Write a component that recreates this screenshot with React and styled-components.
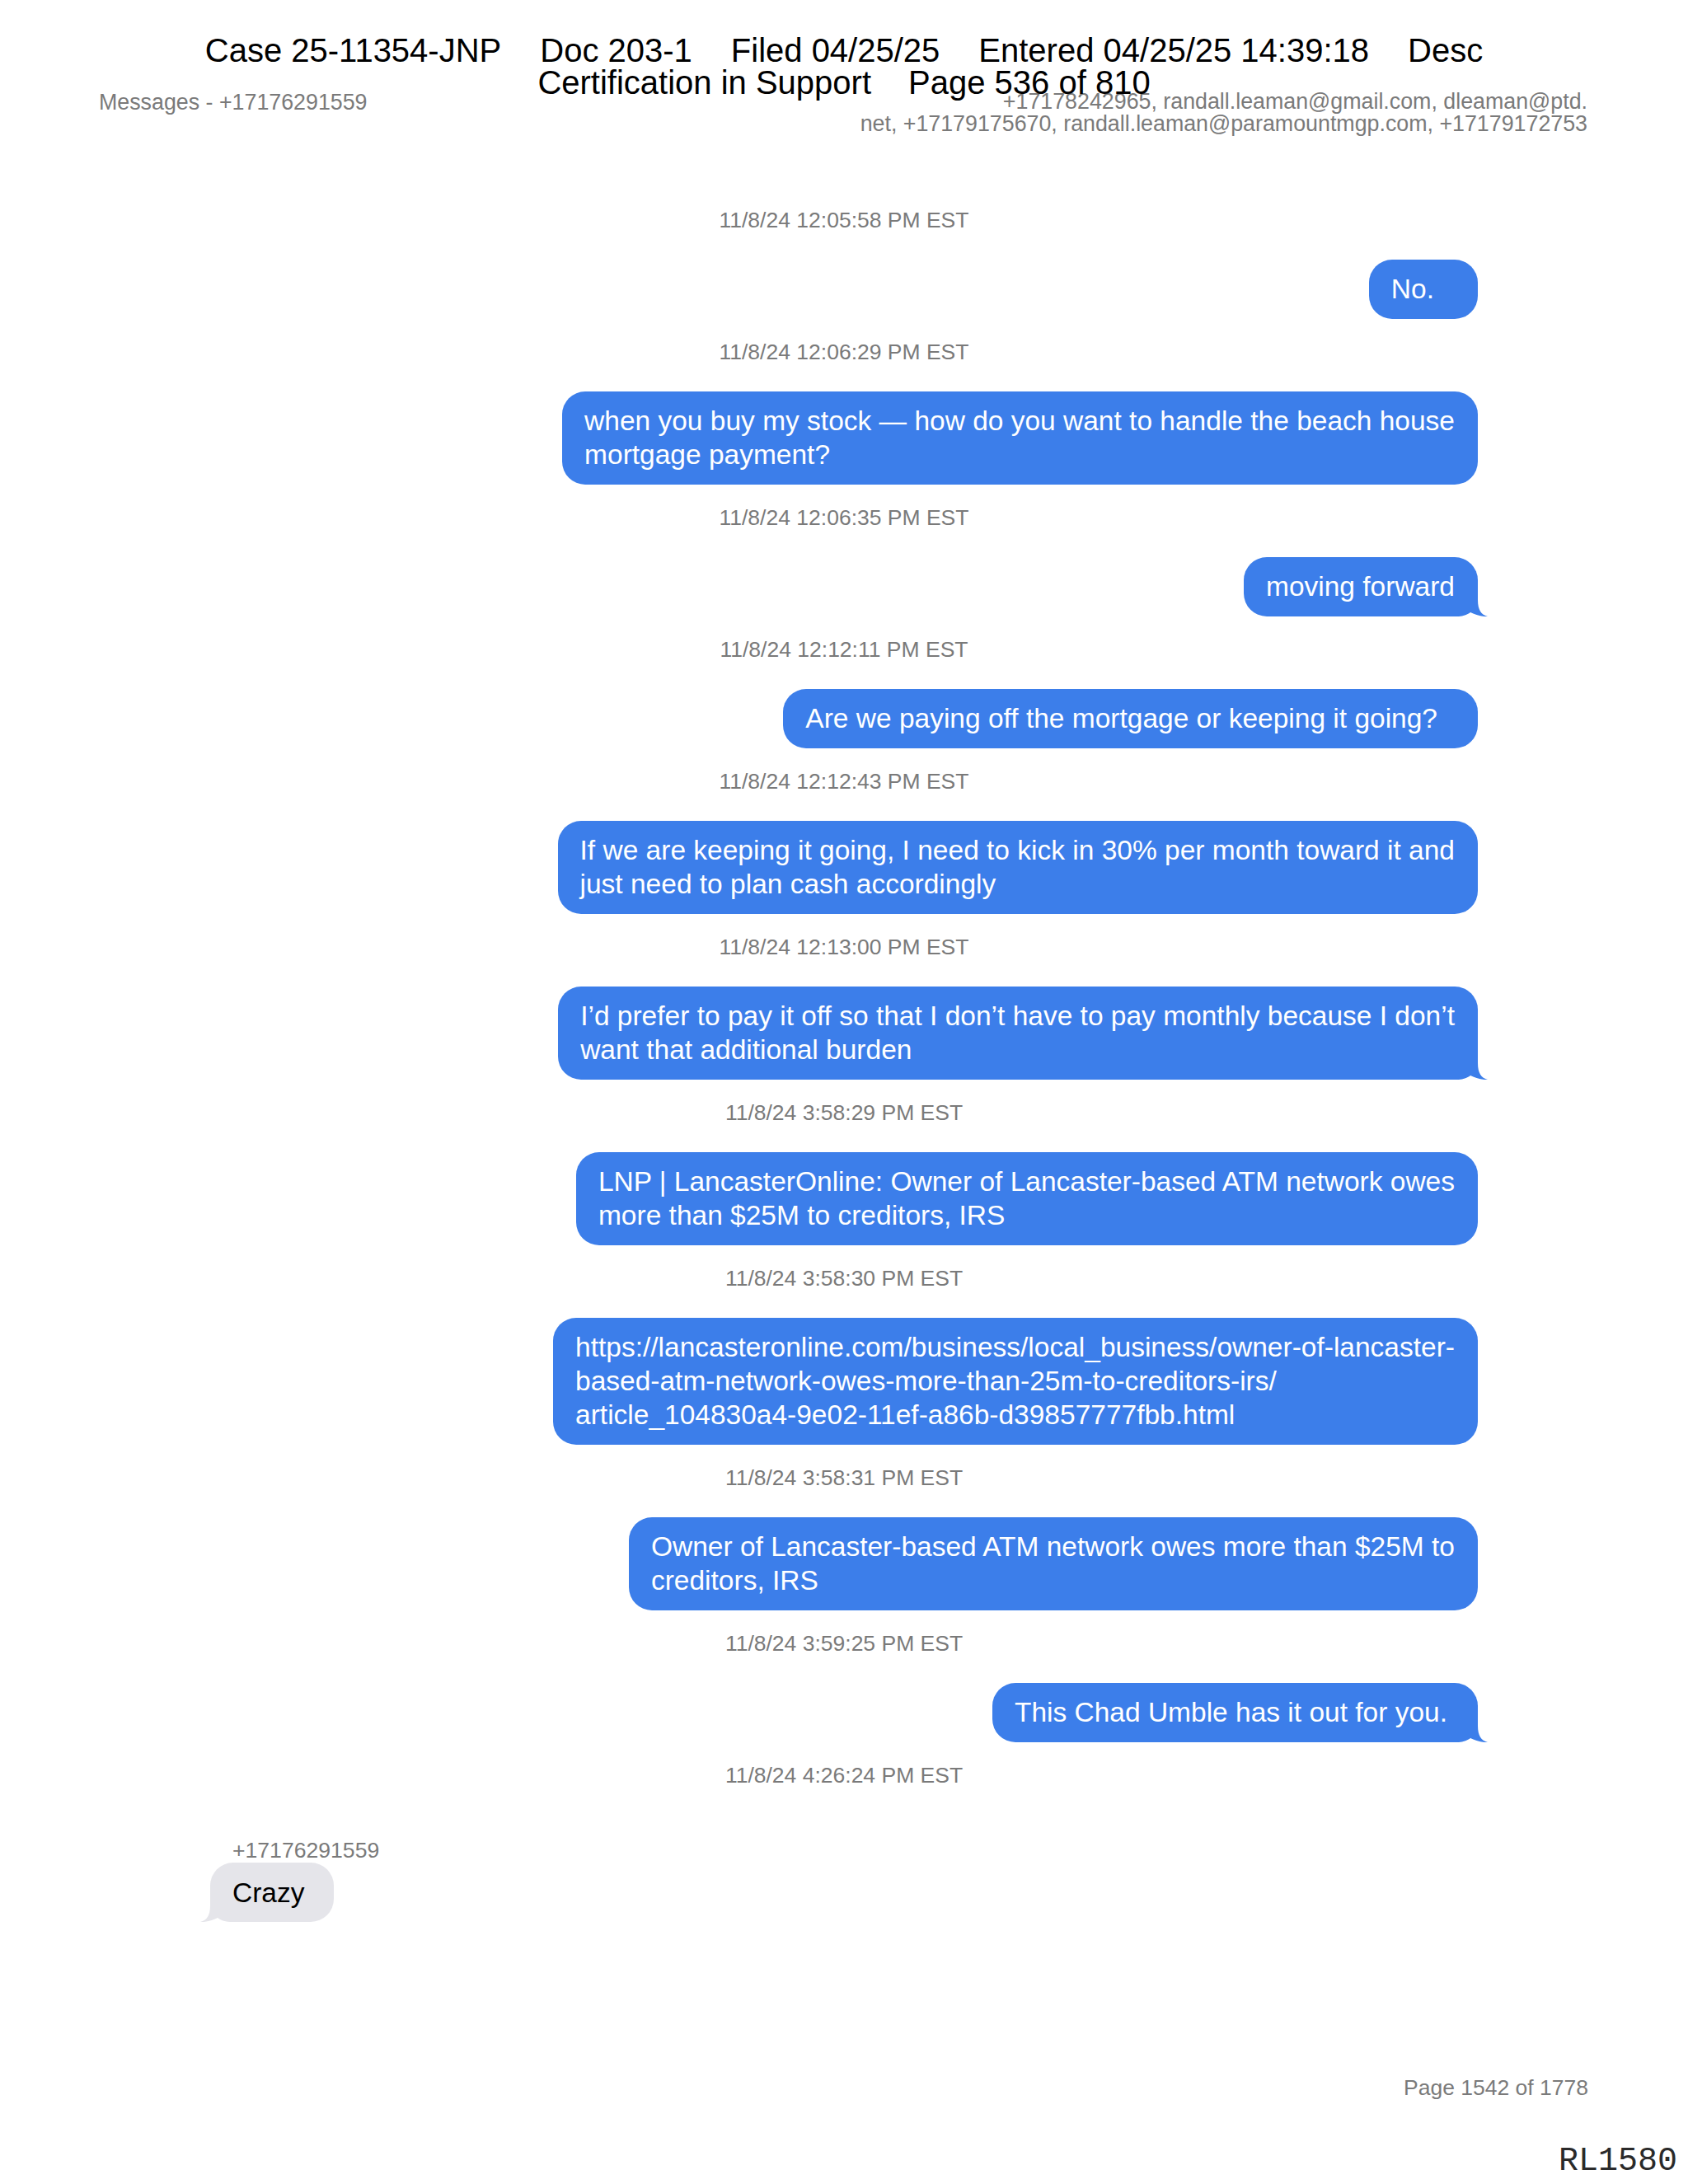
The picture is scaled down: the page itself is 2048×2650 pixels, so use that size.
import React from "react"
import styled, { createGlobalStyle } from "styled-components"

const GlobalStyle = createGlobalStyle`
  html, body {
    margin: 0;
    padding: 0;
    background: #ffffff;
  }
  body {
    font-family: "Liberation Sans", Arial, sans-serif;
  }
`

const Page = styled.div`
  position: relative;
  width: 2048px;
  height: 2650px;
  display: flex;
  flex-direction: column;
  box-sizing: border-box;
  background: #ffffff;
  font-family: "Liberation Sans", Arial, sans-serif;
`

const Stamp = styled.div`
  position: absolute;
  top: 41.5px;
  left: 0;
  right: 0;
  display: flex;
  flex-direction: column;
  align-items: center;
  font-size: 40px;
  line-height: 39px;
  color: #000000;
  pointer-events: none;
`

const StampLine = styled.div`
  display: flex;
  gap: ${(props) => props.gap}px;
  white-space: nowrap;
`

const HeaderRow = styled.div`
  display: flex;
  justify-content: space-between;
  align-items: flex-start;
  margin-top: 110px;
  padding: 0 122px 0 120px;
  font-size: 26.8px;
  line-height: 27px;
  color: #7a7a7a;
`

const HeaderLeft = styled.div`
  margin-top: 1px;
  white-space: nowrap;
`

const HeaderRight = styled.div`
  text-align: right;
  white-space: nowrap;
`

const Thread = styled.div`
  display: flex;
  flex-direction: column;
  padding: 88px 255px 0;
`

const Timestamp = styled.div`
  text-align: center;
  font-size: 26.5px;
  line-height: 30px;
  color: #7a7a7a;
  margin-bottom: 32.5px;
  white-space: nowrap;
`

const BubbleRow = styled.div`
  display: flex;
  justify-content: ${(props) => (props.incoming ? "flex-start" : "flex-end")};
  margin-bottom: 25.5px;
`

const Bubble = styled.div`
  position: relative;
  box-sizing: border-box;
  padding: 15.5px ${(props) => props.padRight || 28}px 15.5px 27px;
  border-radius: 28px;
  background: ${(props) => (props.incoming ? "#e5e5ea" : "#3c7eea")};
  color: ${(props) => (props.incoming ? "#000000" : "#ffffff")};
  font-size: 33.5px;
  line-height: 41px;
  white-space: nowrap;
`

const Tail = styled.svg`
  position: absolute;
  bottom: 0;
  width: 40px;
  height: 28px;
  ${(props) =>
    props.incoming
      ? "left: -12px; transform: scaleX(-1);"
      : "right: -12px;"}
`

const Sender = styled.div`
  margin-top: 28.5px;
  padding-left: 27px;
  font-size: 26.6px;
  line-height: 30px;
  color: #7a7a7a;
`

const Footer = styled.div`
  margin-top: auto;
  display: flex;
  flex-direction: column;
  align-items: flex-end;
  padding-bottom: 4px;
`

const PageNumber = styled.div`
  padding-right: 121px;
  font-size: 26.5px;
  line-height: 30px;
  color: #7a7a7a;
`

const BatesStamp = styled.div`
  margin-top: 52px;
  padding-right: 13px;
  font-family: "Liberation Mono", "Courier New", monospace;
  font-size: 40px;
  line-height: 46px;
  color: #2a2a2a;
`

const messages = [
  { time: "11/8/24 12:05:58 PM EST", lines: ["No."], padRight: 53 },
  {
    time: "11/8/24 12:06:29 PM EST",
    lines: [
      "when you buy my stock \u2014 how do you want to handle the beach house",
      "mortgage payment?",
    ],
  },
  { time: "11/8/24 12:06:35 PM EST", lines: ["moving forward"], tail: true },
  {
    time: "11/8/24 12:12:11 PM EST",
    lines: ["Are we paying off the mortgage or keeping it going?"],
    padRight: 49,
  },
  {
    time: "11/8/24 12:12:43 PM EST",
    lines: [
      "If we are keeping it going, I need to kick in 30% per month toward it and",
      "just need to plan cash accordingly",
    ],
  },
  {
    time: "11/8/24 12:13:00 PM EST",
    lines: [
      "I\u2019d prefer to pay it off so that I don\u2019t have to pay monthly because I don\u2019t",
      "want that additional burden",
    ],
    tail: true,
  },
  {
    time: "11/8/24 3:58:29 PM EST",
    lines: [
      "LNP | LancasterOnline: Owner of Lancaster-based ATM network owes",
      "more than $25M to creditors, IRS",
    ],
  },
  {
    time: "11/8/24 3:58:30 PM EST",
    lines: [
      "https://lancasteronline.com/business/local_business/owner-of-lancaster-",
      "based-atm-network-owes-more-than-25m-to-creditors-irs/",
      "article_104830a4-9e02-11ef-a86b-d39857777fbb.html",
    ],
  },
  {
    time: "11/8/24 3:58:31 PM EST",
    lines: [
      "Owner of Lancaster-based ATM network owes more than $25M to",
      "creditors, IRS",
    ],
  },
  {
    time: "11/8/24 3:59:25 PM EST",
    lines: ["This Chad Umble has it out for you."],
    tail: true,
    padRight: 37,
  },
]

const BubbleTail = ({ incoming }) => (
  <Tail incoming={incoming} viewBox="0 0 40 28">
    <path
      d="M0 0 L28 0 L28 8 C28 20 32 26 40 28 C32 28.6 24 25.5 19 23 C15 26 10 28 0 28 Z"
      fill={incoming ? "#e5e5ea" : "#3c7eea"}
    />
  </Tail>
)

const MessageBubble = ({ lines, tail, incoming, padRight }) => (
  <BubbleRow incoming={incoming}>
    <Bubble incoming={incoming} padRight={padRight}>
      {lines.map((line, i) => (
        <React.Fragment key={i}>
          {i > 0 && <br />}
          {line}
        </React.Fragment>
      ))}
      {tail && <BubbleTail incoming={incoming} />}
    </Bubble>
  </BubbleRow>
)

const App = () => {
  return (
    <>
      <GlobalStyle />
      <Page>
        <Stamp>
          <StampLine gap={47}>
            <span>Case 25-11354-JNP</span>
            <span>Doc 203-1</span>
            <span>Filed 04/25/25</span>
            <span>Entered 04/25/25 14:39:18</span>
            <span>Desc</span>
          </StampLine>
          <StampLine gap={45}>
            <span>Certification in Support</span>
            <span>Page 536 of 810</span>
          </StampLine>
        </Stamp>

        <HeaderRow>
          <HeaderLeft>Messages - +17176291559</HeaderLeft>
          <HeaderRight>
            +17178242965, randall.leaman@gmail.com, dleaman@ptd.
            <br />
            net, +17179175670, randall.leaman@paramountmgp.com, +17179172753
          </HeaderRight>
        </HeaderRow>

        <Thread>
          {messages.map((m) => (
            <React.Fragment key={m.time}>
              <Timestamp>{m.time}</Timestamp>
              <MessageBubble lines={m.lines} tail={m.tail} padRight={m.padRight} />
            </React.Fragment>
          ))}
          <Timestamp>11/8/24 4:26:24 PM EST</Timestamp>
          <Sender>+17176291559</Sender>
          <MessageBubble lines={["Crazy"]} tail incoming padRight={36} />
        </Thread>

        <Footer>
          <PageNumber>Page 1542 of 1778</PageNumber>
          <BatesStamp>RL1580</BatesStamp>
        </Footer>
      </Page>
    </>
  )
}

export default App
